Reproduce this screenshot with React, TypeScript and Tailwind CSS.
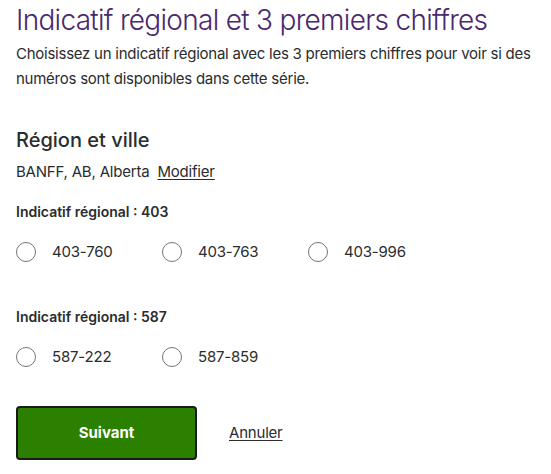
const groups = [
  { code: "403", options: ["403-760", "403-763", "403-996"] },
  { code: "587", options: ["587-222", "587-859"] },
];

const Radio = ({ label }: { label: string }) => (
  <label className="flex items-center w-[146px] cursor-pointer">
    <span className="w-5 h-5 rounded-full border border-[#71757b] bg-white shrink-0" />
    <span className="ml-4 text-[15px] tracking-[-0.2px] text-[#2a2c2e]">{label}</span>
  </label>
);

export default function App() {
  return (
    <div className="bg-white min-h-[474px] px-4 pt-[2px] font-['Inter',sans-serif] text-[#2a2c2e]">
      <h1 className="text-[28px] leading-[36px] font-light tracking-[-0.7px] text-[#4b286d]">
        Indicatif régional et 3 premiers chiffres
      </h1>
      <p className="mt-[3px] text-[15px] leading-[25px] tracking-[-0.25px]">
        Choisissez un indicatif régional avec les 3 premiers chiffres pour voir si des numéros sont disponibles dans cette série.
      </p>

      <h2 className="mt-[35px] text-[20px] leading-[28px] font-medium">Région et ville</h2>
      <p className="mt-[7px] text-[15px] leading-[22px] tracking-[-0.2px]">
        BANFF, AB, Alberta{" "}
        <a href="#" className="ml-[4px] underline underline-offset-2">Modifier</a>
      </p>

      {groups.map((g, i) => (
        <div key={g.code} className={i === 0 ? "mt-[19px]" : "mt-[43px]"}>
          <h3 className="text-[14px] leading-[20px] font-semibold">Indicatif régional : {g.code}</h3>
          <div className="mt-[19px] flex">
            {g.options.map((o) => (
              <Radio key={o} label={o} />
            ))}
          </div>
        </div>
      ))}

      <div className="mt-[38px] flex items-center">
        <button className="w-[181px] h-[54px] rounded-[4px] border-2 border-[#1a1a1a] bg-[#2b8000] text-white text-[15px] font-bold">
          Suivant
        </button>
        <a href="#" className="ml-8 text-[15px] tracking-[-0.2px] underline underline-offset-2">Annuler</a>
      </div>
    </div>
  );
}
